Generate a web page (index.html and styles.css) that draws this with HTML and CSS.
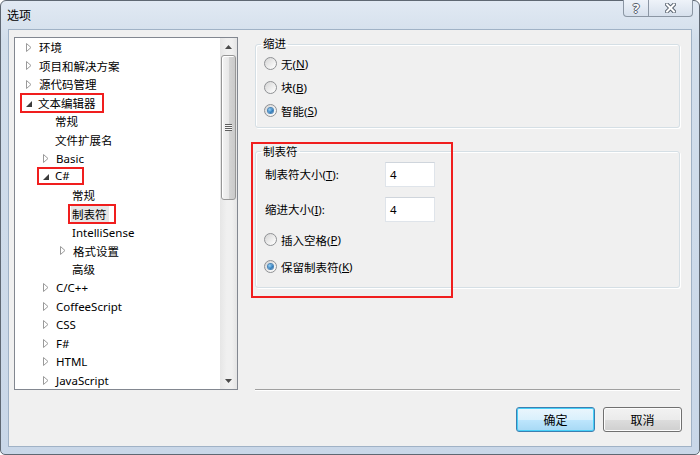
FILE: index.html
```html
<!DOCTYPE html>
<html lang="zh-CN">
<head>
    <meta charset="UTF-8">
    <title>选项</title>
    <link rel="stylesheet" href="styles.css">
</head>
<body>
    <svg class="defs" width="0" height="0">
        <symbol id="tri-closed" viewBox="0 0 6 9">
            <path d="M0.5 0.5 L5 4.5 L0.5 8.5 Z" fill="#fff" stroke="#9a9a9a" stroke-width="1"/>
        </symbol>
        <symbol id="tri-open" viewBox="0 0 6 6">
            <path d="M6 0 L6 6 L0 6 Z" fill="#3c3c3c"/>
        </symbol>
    </svg>

    <div class="window">
        <div class="titlebar">
            <span class="title">选项</span>
            <div class="caption-btns">
                <span class="cap-btn help">?</span>
                <span class="cap-btn close">
                    <svg width="11" height="10" viewBox="0 0 11 10">
                        <path d="M2 1.5 L9 8.5 M9 1.5 L2 8.5" stroke="#59636f" stroke-width="4" stroke-linecap="square"/>
                        <path d="M2 1.5 L9 8.5 M9 1.5 L2 8.5" stroke="#ffffff" stroke-width="2" stroke-linecap="square"/>
                    </svg>
                </span>
            </div>
        </div>

        <div class="client">
            <div class="main">
                <div class="tree">
                    <ul class="nodes">
                        <li class="node l0"><svg class="arrow closed"><use href="#tri-closed"/></svg>环境</li>
                        <li class="node l0"><svg class="arrow closed"><use href="#tri-closed"/></svg>项目和解决方案</li>
                        <li class="node l0"><svg class="arrow closed"><use href="#tri-closed"/></svg>源代码管理</li>
                        <li class="node l0"><span class="mark"><svg class="arrow open"><use href="#tri-open"/></svg>文本编辑器</span></li>
                        <li class="node l1"><span class="spacer"></span>常规</li>
                        <li class="node l1"><span class="spacer"></span>文件扩展名</li>
                        <li class="node l1"><svg class="arrow closed"><use href="#tri-closed"/></svg>Basic</li>
                        <li class="node l1"><span class="mark short"><svg class="arrow open"><use href="#tri-open"/></svg>C#</span></li>
                        <li class="node l2"><span class="spacer"></span>常规</li>
                        <li class="node l2"><span class="spacer"></span><span class="mark label"><span class="selected">制表符</span></span></li>
                        <li class="node l2"><span class="spacer"></span>IntelliSense</li>
                        <li class="node l2"><svg class="arrow closed"><use href="#tri-closed"/></svg>格式设置</li>
                        <li class="node l2"><span class="spacer"></span>高级</li>
                        <li class="node l1"><svg class="arrow closed"><use href="#tri-closed"/></svg>C/C++</li>
                        <li class="node l1"><svg class="arrow closed"><use href="#tri-closed"/></svg>CoffeeScript</li>
                        <li class="node l1"><svg class="arrow closed"><use href="#tri-closed"/></svg>CSS</li>
                        <li class="node l1"><svg class="arrow closed"><use href="#tri-closed"/></svg>F#</li>
                        <li class="node l1"><svg class="arrow closed"><use href="#tri-closed"/></svg>HTML</li>
                        <li class="node l1"><svg class="arrow closed"><use href="#tri-closed"/></svg>JavaScript</li>
                    </ul>
                    <div class="scrollbar">
                        <div class="sb-arrow">
                            <svg width="7" height="4" viewBox="0 0 7 4"><path d="M3.5 0 L7 4 L0 4 Z" fill="#4a4a4a"/></svg>
                        </div>
                        <div class="thumb"><span class="grip"></span></div>
                        <div class="track"></div>
                        <div class="sb-arrow">
                            <svg width="7" height="4" viewBox="0 0 7 4"><path d="M0 0 L7 0 L3.5 4 Z" fill="#4a4a4a"/></svg>
                        </div>
                    </div>
                </div>

                <div class="panel">
                    <fieldset class="group indent">
                        <legend>缩进</legend>
                        <div class="opt"><span class="radio"></span>无(<u>N</u>)</div>
                        <div class="opt"><span class="radio"></span>块(<u>B</u>)</div>
                        <div class="opt"><span class="radio on"></span>智能(<u>S</u>)</div>
                    </fieldset>

                    <fieldset class="group tabs">
                        <legend>制表符</legend>
                        <div class="field">
                            <span class="field-label">制表符大小(<u>T</u>):</span>
                            <span class="num">4</span>
                        </div>
                        <div class="field">
                            <span class="field-label">缩进大小(<u>I</u>):</span>
                            <span class="num">4</span>
                        </div>
                        <div class="opt first"><span class="radio"></span>插入空格(<u>P</u>)</div>
                        <div class="opt second"><span class="radio on"></span>保留制表符(<u>K</u>)</div>
                    </fieldset>

                    <div class="annot"></div>
                    <div class="separator"></div>
                </div>
            </div>

            <div class="footer">
                <span class="btn default">确定</span>
                <span class="btn">取消</span>
            </div>
        </div>
    </div>
</body>
</html>
```

FILE: styles.css
```css
body {
    margin: 0;
    font-family: "Noto Sans", "Noto Sans CJK SC", sans-serif;
    font-size: 11.5px;
    color: #000;
    background: #fff;
}
.defs {
    position: absolute;
}
u {
    text-decoration: underline;
    text-underline-offset: 1px;
}

/* window frame */
.window {
    width: 700px;
    height: 455px;
    box-sizing: border-box;
    border: 1px solid #5f6873;
    border-radius: 6px 6px 5px 5px;
    background: linear-gradient(#e1e9f3, #d2deeb 40px, #c9d7e8);
    padding: 0 7px 7px;
    display: flex;
    flex-direction: column;
}
.titlebar {
    height: 28px;
    display: flex;
    align-items: flex-start;
}
.title {
    margin: 5px 0 0 -1px;
    font-size: 12px;
}
.caption-btns {
    margin: -1px -1px 0 auto;
    display: flex;
}
.cap-btn {
    height: 17px;
    box-sizing: border-box;
    border: 1px solid #8b96a3;
    border-top: none;
    background: linear-gradient(#eef3f9, #d6e0ec);
    display: flex;
    align-items: center;
    justify-content: center;
}
.help {
    width: 26px;
    border-radius: 0 0 0 4px;
    font-size: 13px;
    font-weight: bold;
    color: #fff;
    text-shadow: 1px 0 0 #56606c, -1px 0 0 #56606c, 0 1px 0 #56606c, 0 -1px 0 #56606c;
}
.close {
    width: 44px;
    border-left: none;
    border-radius: 0 0 4px 0;
}

.client {
    flex: 1;
    background: #f0f0f0;
    border: 1px solid #a0b2c6;
    display: flex;
    flex-direction: column;
}
.main {
    display: flex;
    gap: 17px;
    padding: 7px 11px 0 5px;
}

/* tree */
.tree {
    width: 224px;
    height: 353px;
    box-sizing: border-box;
    border: 1px solid #828790;
    background: #fff;
    display: flex;
}
.nodes {
    flex: 1;
    list-style: none;
    margin: 0;
    padding: 0;
    overflow: hidden;
}
.node {
    height: 18.5px;
    display: flex;
    align-items: center;
    white-space: nowrap;
}
.l0 { padding-left: 10px; }
.l1 { padding-left: 27px; }
.l2 { padding-left: 44px; }
.arrow, .spacer {
    flex: none;
    width: 13px;
}
.arrow.closed {
    height: 9px;
    width: 6px;
    margin: 0 7px 0 1px;
}
.arrow.open {
    height: 6px;
    width: 6px;
    margin: 2px 6px 0 1px;
}
.mark {
    display: inline-flex;
    align-items: center;
    height: 20px;
    padding: 0 8px 0 5px;
    margin: 0 -8px 0 -5px;
    outline: 2px solid #f01e1e;
    outline-offset: -2px;
}
.mark.short {
    height: 18px;
    margin-top: -2px;
    padding-right: 14px;
}
.mark.label {
    padding: 0 7px 0 3px;
    margin: 0 0 0 -4px;
}
.selected {
    background: #e6e6e6;
    padding: 0 2px 0 1px;
}

.scrollbar {
    width: 17px;
    flex: none;
    display: flex;
    flex-direction: column;
    background: linear-gradient(90deg, #e6e6e6, #f0f0f0 40%, #f0f0f0 70%, #e4e4e4);
}
.sb-arrow {
    height: 17px;
    display: flex;
    align-items: center;
    justify-content: center;
}
.thumb {
    height: 145px;
    margin: 0 1px;
    box-sizing: border-box;
    border: 1px solid #979797;
    border-radius: 3px;
    background: linear-gradient(90deg, #f4f4f4, #e8e8e8 50%, #d5d5d5 51%, #cacaca);
    box-shadow: inset 1px 1px 0 #fff;
    display: flex;
    align-items: center;
    justify-content: center;
}
.grip {
    width: 7px;
    height: 7px;
    background: repeating-linear-gradient(#5f5f5f 0 1px, #f6f6f6 1px 2px);
}
.track {
    flex: 1;
}

/* options panel */
.panel {
    flex: 1;
    position: relative;
    display: flex;
    flex-direction: column;
}
.group {
    margin: 0;
    border: 1px solid #d5dfe5;
    border-radius: 3px;
    box-shadow: inset 1px 1px 0 #fff, 1px 1px 0 #fff;
}
.group legend {
    padding: 0 2px;
    margin-left: -4px;
    line-height: 14px;
}
.indent {
    padding: 1px 8px 4px 9px;
}
.tabs {
    margin-top: 17px;
    padding: 3px 8px 9px 9px;
}
.opt {
    display: flex;
    align-items: center;
    height: 23.5px;
}
.tabs .opt {
    height: 22px;
}
.tabs .opt.first { margin-top: 7px; }
.tabs .opt.second { margin-top: 5px; }
.radio {
    flex: none;
    width: 13px;
    height: 13px;
    box-sizing: border-box;
    margin: 0 4px 0 -1px;
    border: 1px solid #8f9194;
    border-radius: 50%;
    background: linear-gradient(135deg, #d4d4d4, #f4f4f4 70%, #fff);
    display: flex;
    align-items: center;
    justify-content: center;
}
.radio.on::after {
    content: "";
    width: 5px;
    height: 5px;
    border-radius: 50%;
    background: radial-gradient(circle at 35% 35%, #9ad4f8, #2f7dbe 60%, #1c4f85);
    box-shadow: 0 0 0 1px #4c86b8;
}
.field {
    display: flex;
    align-items: center;
    height: 25px;
}
.field + .field {
    margin-top: 10px;
}
.field-label {
    width: 120px;
}
.num {
    width: 50px;
    height: 25px;
    box-sizing: border-box;
    border: 1px solid #dfe4ea;
    border-top-color: #cfd5dc;
    background: #fff;
    padding-left: 4px;
    display: flex;
    align-items: center;
}
.annot {
    position: absolute;
    left: -4px;
    top: 105px;
    width: 202px;
    height: 156px;
    box-sizing: border-box;
    border: 2px solid #f01e1e;
}
.separator {
    margin-top: auto;
    margin-bottom: -1px;
    border-top: 1px solid #a0a0a0;
    border-bottom: 1px solid #fff;
}

/* buttons */
.footer {
    display: flex;
    justify-content: flex-end;
    gap: 8px;
    padding: 17px 9px 0 0;
}
.btn {
    width: 79px;
    height: 25px;
    box-sizing: border-box;
    border: 1px solid #707070;
    border-radius: 3px;
    background: linear-gradient(#f2f2f2 0, #ebebeb 50%, #dddddd 50%, #cfcfcf 100%);
    box-shadow: inset 0 0 0 1px #fcfcfc;
    display: flex;
    align-items: center;
    justify-content: center;
    font-size: 12px;
}
.btn.default {
    border-color: #3c7fb1;
    background: linear-gradient(#eaf6fd 0, #d9f0fc 50%, #bee6fd 50%, #a7d9f5 100%);
    box-shadow: inset 0 0 0 1px #48d0f8;
}
```
